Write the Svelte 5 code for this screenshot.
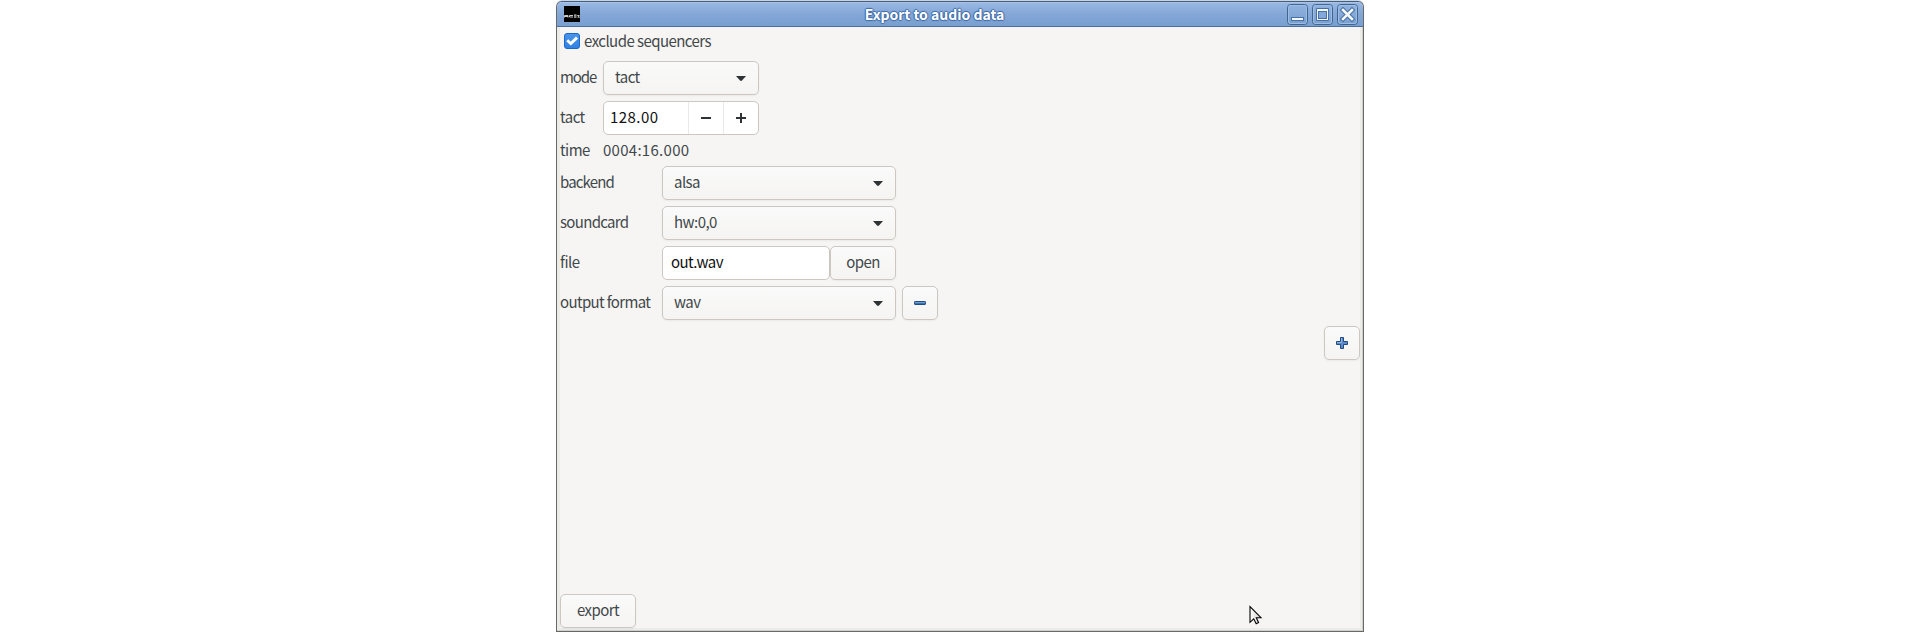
<script>
  const rows = [
    { label: 'backend', value: 'alsa', kind: 'combo', tracking: -0.85 },
    { label: 'soundcard', value: 'hw:0,0', kind: 'combo', tracking: -0.68 },
    { label: 'file', value: 'out.wav', kind: 'file', tracking: -0.5 },
    { label: 'output format', value: 'wav', kind: 'format', tracking: -0.65 }
  ];
</script>

{#snippet combo(value)}
  <div class="box combo">
    <span>{value}</span>
    <svg width="10" height="5" viewBox="0 0 10 5"><path d="M0 0H10L6 4.5Q5 5.4 4 4.5Z" fill="#2e3436" /></svg>
  </div>
{/snippet}

<div class="page">
  <div class="window">
    <header>
      <svg class="logo" width="16" height="16" viewBox="0 0 16 16">
        <rect width="16" height="16" fill="#000" />
        <path d="M.5 11.5V9.5H4V11.5M1 10.5H4M9 9.5H5.5V11H9M10 9H12.5M10 10H12.5M10 11.2H12.5M15.5 9.5H13.5L15.5 11.2H13.5" fill="none" stroke="#ddd" stroke-width=".9" />
      </svg>
      <h1>Export to audio data</h1>
      <div class="controls">
        <svg width="21" height="21" viewBox="0 0 21 21">
          <rect x=".5" y=".5" width="20" height="20" rx="3" fill="url(#wg)" stroke="#41658f" />
          <rect x="1.5" y="1.5" width="18" height="18" rx="2" fill="none" stroke="#9dbde3" />
          <rect x="4.5" y="13.5" width="12" height="3" fill="#f4f7fa" stroke="#4770a4" />
          <defs><linearGradient id="wg" x2="0" y2="1"><stop stop-color="#91b2df" /><stop offset="1" stop-color="#789fd0" /></linearGradient></defs>
        </svg>
        <svg width="21" height="21" viewBox="0 0 21 21">
          <rect x=".5" y=".5" width="20" height="20" rx="3" fill="url(#wg)" stroke="#41658f" />
          <rect x="1.5" y="1.5" width="18" height="18" rx="2" fill="none" stroke="#9dbde3" />
          <path d="M4.5 4.5H16.5V16.5H4.5Z" fill="#f4f7fa" stroke="#4770a4" />
          <rect x="6.5" y="7.5" width="8" height="7" fill="#83a7d7" stroke="#4770a4" />
        </svg>
        <svg width="21" height="21" viewBox="0 0 21 21">
          <rect x=".5" y=".5" width="20" height="20" rx="3" fill="url(#wg)" stroke="#41658f" />
          <rect x="1.5" y="1.5" width="18" height="18" rx="2" fill="none" stroke="#9dbde3" />
          <path d="M6 6L15 15M15 6L6 15" stroke="#4770a4" stroke-width="4.6" stroke-linecap="square" />
          <path d="M6 6L15 15M15 6L6 15" stroke="#f4f7fa" stroke-width="2.6" stroke-linecap="square" />
        </svg>
      </div>
    </header>

    <main>
      <label class="check">
        <svg width="16" height="16" viewBox="0 0 16 16">
          <defs><linearGradient id="cg" x2="0" y2="1"><stop stop-color="#4b95eb" /><stop offset="1" stop-color="#3081e3" /></linearGradient></defs>
          <rect x=".5" y=".5" width="15" height="15" rx="2.5" fill="url(#cg)" stroke="#1b6acb" />
          <path d="M3.2 7.3L6.8 10.6L13 4.6" fill="none" stroke="#fff" stroke-width="2.9" />
        </svg>
        <span>exclude sequencers</span>
      </label>

      <div class="timing">
        <span class="mode">mode</span>
        {@render combo('tact')}
        <span>tact</span>
        <div class="box spin">
          <span class="amount">128.00</span>
          <span class="step"><svg width="10" height="10"><path d="M0 5H10" stroke="#2e3436" stroke-width="2" /></svg></span>
          <span class="step"><svg width="10" height="10"><path d="M0 5H10M5 0V10" stroke="#2e3436" stroke-width="2" /></svg></span>
        </div>
        <span>time</span>
        <span class="clock">0004:16.000</span>
      </div>

      <div class="output">
        {#each rows as row}
          <span style:letter-spacing="{row.tracking}px">{row.label}</span>
          {#if row.kind === 'file'}
            <div class="file">
              <div class="box entry">{row.value}</div>
              <div class="box button open">open</div>
            </div>
          {:else}
            {@render combo(row.value)}
          {/if}
          {#if row.kind === 'format'}
            <div class="box button icon">
              <svg width="12" height="4" viewBox="0 0 12 4"><rect x=".5" y=".5" width="11" height="3" rx=".6" fill="#729fcf" stroke="#204a87" /><path d="M1 2.5H11" stroke="#3c6eb0" /></svg>
            </div>
          {:else}
            <span></span>
          {/if}
        {/each}
      </div>

      <div class="box button icon add">
        <svg width="12" height="12" viewBox="0 0 12 12"><path d="M4.5 .5H7.5V4.5H11.5V7.5H7.5V11.5H4.5V7.5H.5V4.5H4.5Z" fill="#5b8cc7" stroke="#204a87" stroke-linejoin="round" /><path d="M5.5 1V5.5H1" fill="none" stroke="#8fb3dc" /></svg>
      </div>

      <div class="box button export">export</div>
    </main>

    <svg class="cursor" width="14" height="21" viewBox="0 0 14 21">
      <defs><linearGradient id="pg"><stop stop-color="#fff" /><stop offset="1" stop-color="#ccc" /></linearGradient></defs>
      <path d="M1 1.5V17.3L4.7 13.8L7.2 18.8L9.6 17.6L7.3 12.7H12Z" fill="url(#pg)" stroke="#000" stroke-width="1.1" />
    </svg>
  </div>
</div>

<style>
  :global(body) { margin: 0; background: #fff; }
  .page {
    width: 1920px; height: 632px; overflow: hidden;
    display: flex; justify-content: center;
    font: 15px/20px "Noto Sans CJK SC", "Noto Sans", sans-serif;
    letter-spacing: -0.55px;
    color: #42484a;
    white-space: nowrap;
  }
  .window {
    position: relative; box-sizing: border-box;
    width: 808px; height: 631px; margin-top: 1px;
    border: 1px solid #686966; border-top-color: #3b608f;
    border-radius: 6px 6px 0 0; overflow: hidden;
    background: #ebebe9;
    box-shadow: 0 -1px #d3d4cf, inset -1px -1px #d0d0cc;
    display: flex; flex-direction: column;
  }
  header {
    box-sizing: border-box; height: 25px; flex: none;
    display: flex; align-items: center; justify-content: space-between;
    padding: 0 5px 0 7px;
    background: linear-gradient(#9bbae4, #84a7d7 50%, #789fd0);
    border-bottom: 1px solid #4770a4;
    box-shadow: inset 0 1px #a9c4e8;
  }
  h1 {
    margin: 0; font: bold 14px/20px "Noto Sans CJK SC", sans-serif; color: #fff;
    letter-spacing: 0; padding-left: 2px;
    text-shadow: 1px 0 1px #3f6aa5, -1px 0 1px #3f6aa5, 0 1px 1px #3f6aa5, 0 -1px 1px #3f6aa5;
  }
  .controls { display: flex; gap: 4px; }
  svg { display: block; flex: none; }
  main {
    flex: 1; margin: 0 3px 3px; background: #f6f5f4;
    display: flex; flex-direction: column;
  }
  .check { display: flex; align-items: center; gap: 4px; height: 28px; padding-left: 4px; }
  .timing {
    display: grid; grid-template-columns: 37px 156px; column-gap: 6px;
    grid-template-rows: 34px 34px 19px; row-gap: 6px;
    align-items: center; margin-top: 6px;
  }
  .output {
    display: grid; grid-template-columns: 96px 234px 36px; column-gap: 6px;
    grid-auto-rows: 34px; row-gap: 6px; align-items: center; margin-top: 6px;
  }
  .box {
    box-sizing: border-box; height: 34px;
    border: 1px solid #cdc7c2; border-radius: 5px;
    background: linear-gradient(#fafafa, #f5f4f2);
    box-shadow: 0 1px 2px #0000000d;
    display: flex; align-items: center;
  }
  .combo { justify-content: space-between; padding: 0 12px 0 11px; }
  .timing > span, .output > span, .combo span, .amount, .entry, .open, .export { padding-bottom: 2px; }
  .mode { letter-spacing: -1.1px; }
  .spin, .entry { background: #fff; color: #111; box-shadow: none; }
  .amount { flex: 1; padding-left: 6px; letter-spacing: 0.45px; }
  .clock { letter-spacing: 0.28px; }
  .step {
    box-sizing: border-box; width: 35px; height: 32px;
    border-left: 1px solid #ebe9e7;
    display: flex; align-items: center; justify-content: center;
  }
  .file { display: flex; }
  .entry { width: 168px; padding-left: 8px; }
  .button { justify-content: center; }
  .open { width: 66px; }
  .icon { width: 36px; }
  .add { align-self: flex-end; margin-top: 6px; }
  .export { width: 76px; margin-top: auto; }
  .cursor { position: absolute; left: 692px; top: 603px; }
</style>
